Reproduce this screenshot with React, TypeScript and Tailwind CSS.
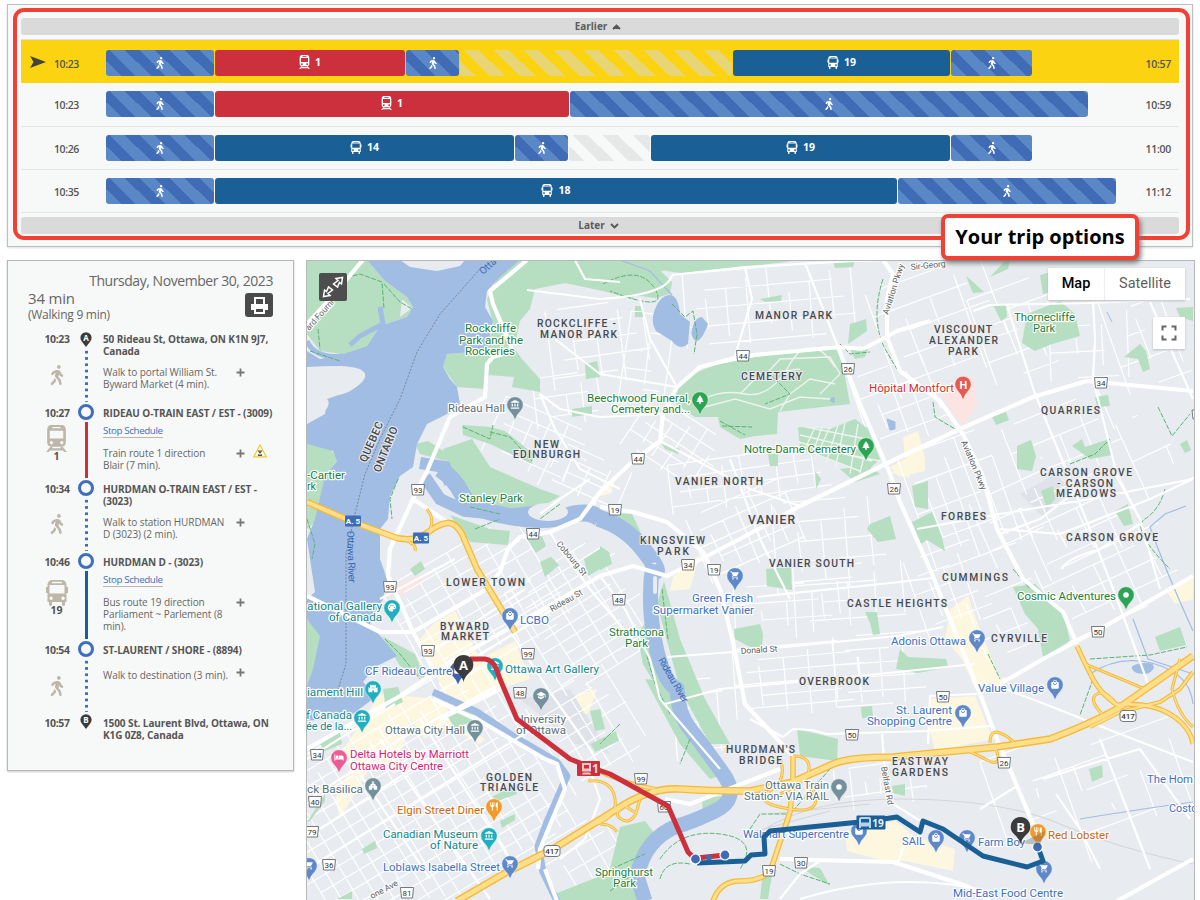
import React from "react";
import {
  MdAccountBalance, MdChurch, MdHotel, MdLocalMall, MdPalette, MdPark, MdRestaurant, MdSchool,
  MdShoppingCart, MdCastle,
} from "react-icons/md";
import { FaWalking } from "react-icons/fa";
import type { IconType } from "react-icons";

/* ---------- small drawings ---------- */

function Walker({ className }: { className: string }) {
  return <FaWalking className={className} />;
}

function TrainIcon({ className }: { className: string }) {
  return (
    <svg viewBox="0 0 20 26" className={className} fill="currentColor">
      <path fillRule="evenodd" d="M4 0h12q3 1 3 5v11q0 5-4 5H5q-4 0-4-5V5q0-4 3-5zM6 2v1.200h8V2zM3.500 5.500v7.500h13V5.500zM5 15.500a1.600 1.600 0 1 0 .1 0zM15 15.500a1.600 1.600 0 1 0 .1 0z" />
      <path d="M4 21h2.500l-1 1.500h9l-1-1.500H16l4 5h-2.500l-1-1.500h-13l-1 1.500H0z" />
    </svg>
  );
}

function BusIcon({ className }: { className: string }) {
  return (
    <svg viewBox="0 0 22 26" className={className} fill="currentColor">
      <path fillRule="evenodd" d="M5 0h12q3 1 3.500 4v3h1.500v6h-1.500v9h-1.500v3q-1.500 2-3 0v-3H6v3q-1.500 2-3 0v-3H1.500v-9H0V7h1.500V4Q2 1 5 0zM6 1.800v1.400h10V1.800zM3.500 5v8.500h15V5zM5 16.500a1.700 1.700 0 1 0 .1 0zM17 16.500a1.700 1.700 0 1 0 .1 0z" />
    </svg>
  );
}

function LetterPin({ letter }: { letter: string }) {
  return (
    <svg viewBox="0 0 12 15" className="h-[15px] w-3">
      <path d="M6 15 1.800 9.500A5.600 5.600 0 1 1 10.200 9.500Z" fill="#3b3b3b" />
      <text x="6" y="8.600" textAnchor="middle" fontSize="8" fontWeight="700" fill="#fff" fontFamily="Open Sans">{letter}</text>
    </svg>
  );
}

/* ---------- trip options ---------- */

type Seg = { kind: "walk" | "train" | "bus" | "wait" | "waitY"; w: string; route?: string };
type Trip = { from: string; to: string; active?: boolean; pad: string; segs: Seg[] };

const trips: Trip[] = [
  {
    from: "10:23", to: "10:57", active: true, pad: "h-[43px] pt-[10px]",
    segs: [
      { kind: "walk", w: "w-[108px]" }, { kind: "train", w: "w-[190px]", route: "1" }, { kind: "walk", w: "w-[53px]" },
      { kind: "waitY", w: "w-[272px]" }, { kind: "bus", w: "w-[217px]", route: "19" }, { kind: "walk", w: "w-[81px]" },
    ],
  },
  {
    from: "10:23", to: "10:59", pad: "h-[44px] border-b pt-[8px]",
    segs: [{ kind: "walk", w: "w-[108px]" }, { kind: "train", w: "w-[354px]", route: "1" }, { kind: "walk", w: "w-[518px]" }],
  },
  {
    from: "10:26", to: "11:00", pad: "h-[43px] border-b pt-[8px]",
    segs: [
      { kind: "walk", w: "w-[108px]" }, { kind: "bus", w: "w-[299px]", route: "14" }, { kind: "walk", w: "w-[53px]" },
      { kind: "wait", w: "w-[81px]" }, { kind: "bus", w: "w-[299px]", route: "19" }, { kind: "walk", w: "w-[81px]" },
    ],
  },
  {
    from: "10:35", to: "11:12", pad: "h-[43px] border-b pt-[8px]",
    segs: [{ kind: "walk", w: "w-[108px]" }, { kind: "bus", w: "w-[682px]", route: "18" }, { kind: "walk", w: "w-[218px]" }],
  },
];

const segStyle = {
  walk: "bg-[#3f6cb5] bg-[linear-gradient(45deg,#5a87c6_25%,transparent_25%,transparent_50%,#5a87c6_50%,#5a87c6_75%,transparent_75%)] bg-[length:30px_30px] bg-[position:0_100%]",
  train: "bg-[#cc303c]",
  bus: "bg-[#1a5f96]",
  wait: "bg-[linear-gradient(45deg,#e6e8e8_25%,transparent_25%,transparent_50%,#e6e8e8_50%,#e6e8e8_75%,transparent_75%)] bg-[length:30px_30px] bg-[position:0_100%]",
  waitY: "bg-[linear-gradient(45deg,#e8d576_25%,transparent_25%,transparent_50%,#e8d576_50%,#e8d576_75%,transparent_75%)] bg-[length:30px_30px] bg-[position:0_100%]",
};

function TripRow({ trip }: { trip: Trip }) {
  return (
    <div className={`flex items-start border-[#e4e6e6] ${trip.active ? "bg-[#fbd310]" : ""} ${trip.pad}`}>
      <div className="flex h-[26px] w-[85px] items-center pl-2 text-[10.5px] font-semibold text-[#555]">
        <svg viewBox="0 0 17 12" className={`mb-[2px] h-3 w-[17px] ${trip.active ? "" : "invisible"}`}>
          <path d="M1 0 17 6 1 12 4.500 6Z" fill="#43433b" />
        </svg>
        <span className="ml-2 mt-[4px] tracking-[-0.4px]">{trip.from}</span>
      </div>
      <div className="flex flex-1 gap-px">
        {trip.segs.map((s, i) => (
          <div key={i} className={`flex h-[26px] items-center justify-center rounded-[3px] text-white ${s.w} ${segStyle[s.kind]}`}>
            {s.kind === "walk" && <Walker className="h-[12px] w-[10px]" />}
            {s.kind === "train" && <TrainIcon className="mb-[2px] h-[14px] w-[11px]" />}
            {s.kind === "bus" && <BusIcon className="mb-[2px] h-[13px] w-[12px]" />}
            {s.route && <span className="mb-[2px] ml-[5px] text-[10.5px] font-bold leading-none">{s.route}</span>}
          </div>
        ))}
      </div>
      <span className="mr-2 mt-[7px] text-[10.5px] font-semibold tracking-[-0.3px] text-[#555]">{trip.to}</span>
    </div>
  );
}

function Chevron({ flip, solid }: { flip?: boolean; solid?: boolean }) {
  return (
    <svg viewBox="0 0 9 6" className={`h-[6px] w-[9px] ${flip ? "rotate-180" : ""}`}>
      <path d="M1 5 4.500 1.500 8 5" fill={solid ? "#555" : "none"} stroke="#555" strokeWidth="1.800" />
    </svg>
  );
}

function TripOptions() {
  return (
    <section className="relative ml-[7px] mt-[4px] h-[243px] w-[1186px] shrink-0 border border-[#bdbfbf] bg-[#f7f9f8] px-[13px] pt-[13px] shadow-[0_1px_2px_#ddd]">
      <div className="flex h-[17px] items-center justify-center gap-[5px] rounded-[3px] bg-[#dadada] pr-[4px] text-[10px] font-bold text-[#5c5c5c]">
        Earlier <Chevron solid />
      </div>
      <div className="mt-1 w-[1158px] border-t border-[#dfe1e6]">
        {trips.map((t, i) => <TripRow key={i} trip={t} />)}
      </div>
      <div className="mt-1 flex h-[17px] items-center justify-center gap-[5px] rounded-[3px] bg-[#dadada] pr-[3px] text-[10px] font-bold text-[#5c5c5c]">
        Later <Chevron flip />
      </div>
      <div className="absolute left-[5px] top-[3px] h-[232px] w-[1177px] rounded-[11px] border-4 border-[#f04134]" />
      <div className="absolute left-[933px] top-[209px] z-10 flex h-[46px] w-[198px] items-center justify-center rounded-[7px] border-4 border-[#f04134] bg-white text-[20px] font-bold text-black shadow-[2px_3px_5px_#777]">
        Your trip options
      </div>
    </section>
  );
}

/* ---------- itinerary ---------- */

type Stop = {
  time: string; h: string; mark: string; title: string; titlePad: string; link?: boolean;
  legPad?: string; leg?: string; plus?: string; alert?: boolean;
  icon?: "walk" | "train" | "bus"; iconPad?: string; route?: string; line?: string;
};

const DOTS = "w-[3px] bg-[radial-gradient(circle,#3f6fbb_1.400px,transparent_1.700px)] bg-[length:3px_6.300px]";

const stops: Stop[] = [
  { time: "10:23", h: "h-[72px]", mark: "A", title: "50 Rideau St, Ottawa, ON K1N 9J7, Canada", titlePad: "pt-[1px]", leg: "Walk to portal William St. Byward Market (4 min).", legPad: "pt-[9px]", plus: "mt-[2px]", icon: "walk", iconPad: "mt-[20px]", line: DOTS },
  { time: "10:27", h: "h-[76px]", mark: "", title: "RIDEAU O-TRAIN EAST / EST - (3009)", titlePad: "pt-[3px]", link: true, leg: "Train route 1 direction\nBlair (7 min).", legPad: "pt-[9px]", plus: "mt-[2px]", alert: true, icon: "train", iconPad: "mt-[6px]", route: "1", line: "w-[3px] bg-[#cc303c]" },
  { time: "10:34", h: "h-[73px]", mark: "", title: "HURDMAN O-TRAIN EAST / EST - (3023)", titlePad: "pt-[3px]", leg: "Walk to station HURDMAN D (3023) (2 min).", legPad: "pt-[9px]", plus: "mt-[2px]", icon: "walk", iconPad: "mt-[19px]", line: DOTS },
  { time: "10:46", h: "h-[88px]", mark: "", title: "HURDMAN D - (3023)", titlePad: "pt-[3px]", link: true, leg: "Bus route 19 direction Parliament ~ Parlement (8 min).", legPad: "pt-[9px]", plus: "mt-[2px]", icon: "bus", iconPad: "mt-[12px]", route: "19", line: "w-[3px] bg-[#1a5f96]" },
  { time: "10:54", h: "h-[73px]", mark: "", title: "ST-LAURENT / SHORE - (8894)", titlePad: "pt-[3px]", leg: "Walk to destination (3 min).", legPad: "pt-[13px]", plus: "-mt-[1px]", icon: "walk", iconPad: "mt-[20px]", line: DOTS },
  { time: "10:57", h: "h-[40px]", mark: "B", title: "1500 St. Laurent Blvd, Ottawa, ON K1G 0Z8, Canada", titlePad: "pt-[3px]" },
];

function StopRow({ s }: { s: Stop }) {
  return (
    <div className={`flex leading-[12px] ${s.h}`}>
      <div className="flex w-[50px] shrink-0 flex-col items-center text-[#555]">
        <span className={`ml-[8px] text-[10.5px] font-bold tracking-[-0.4px] ${s.titlePad}`}>{s.time}</span>
        {s.icon === "walk" && <Walker className={`ml-[7px] h-[20px] w-[16px] text-[#bdb6a9] ${s.iconPad}`} />}
        {s.icon === "train" && <TrainIcon className={`ml-[7px] h-[27px] w-[21px] text-[#bdb6a9] ${s.iconPad}`} />}
        {s.icon === "bus" && <BusIcon className={`ml-[7px] h-[26px] w-[24px] text-[#bdb6a9] ${s.iconPad}`} />}
        {s.route && <span className="-mt-px ml-[7px] text-[10.5px] font-bold leading-[10px]">{s.route}</span>}
      </div>
      <div className="flex w-[16px] shrink-0 flex-col items-center">
        {s.mark ? <LetterPin letter={s.mark} /> : <div className="h-[16px] w-[16px] shrink-0 rounded-full border-[3px] border-[#3f6fbb] bg-[#f7f9f8]" />}
        {s.line && <div className={`my-[2px] flex-1 ${s.line}`} />}
      </div>
      <div className="ml-[9px] w-[172px] shrink-0">
        <div className={`text-[10px] font-bold tracking-[-0.1px] text-[#555] ${s.titlePad}`}>{s.title}</div>
        {s.link && <a className="mt-[6px] block w-fit border-b border-[#bdb6a9] text-[9.8px] tracking-[-0.4px] text-[#3f6fbb]">Stop Schedule</a>}
        {s.leg && (
          <div className={`flex ${s.legPad}`}>
            <p className="w-[128px] shrink-0 whitespace-pre-line text-[10px] tracking-[-0.08px] text-[#666]">{s.leg}</p>
            <svg viewBox="0 0 9 9" className={`ml-[5px] h-[9px] w-[9px] shrink-0 ${s.plus}`}><path d="M4.500 .5v8M.5 4.500h8" stroke="#777" strokeWidth="1.800" /></svg>
            {s.alert && (
              <svg viewBox="0 0 14 14" className="-mt-[3px] ml-[8px] h-[14px] w-[14px] shrink-0">
                <path d="M7 1 13.200 12.800H.8Z" fill="#fffdf0" stroke="#f4c92b" strokeWidth="1.200" />
                <path d="m5 6.500 4 5m0-5-4 5M5 7h4M5 11.500h4" stroke="#555" strokeWidth="1.100" />
              </svg>
            )}
          </div>
        )}
      </div>
    </div>
  );
}

function Itinerary() {
  return (
    <aside className="h-[511px] w-[287px] shrink-0 border border-[#b5b8b7] bg-[#f7f9f8] pl-[20px] pr-[20px] pt-[12px] text-[#666] shadow-[0_1px_2px_#ccc]">
      <p className="text-right text-[14px] leading-[16px] tracking-[-0.44px]">Thursday, November 30, 2023</p>
      <div className="flex justify-between">
        <div>
          <p className="mt-px text-[15px] leading-[17px] tracking-[-0.2px]">34 min</p>
          <p className="text-[12px] leading-[16px] tracking-[-0.25px]">(Walking 9 min)</p>
        </div>
        <div className="mt-[4px] flex h-[24px] w-[28px] items-center justify-center rounded-[3px] bg-[#4a4a4a]">
          <svg viewBox="0 0 17 17" className="h-[17px] w-[17px]" fill="none" stroke="#fff" strokeWidth="2">
            <path d="M4 8V1h9v7" />
            <path d="M1 13V8h15v5" fill="#fff" />
            <path d="M4 11h9v5H4z" fill="#4a4a4a" />
          </svg>
        </div>
      </div>
      <div className="mt-[9px]">{stops.map((s) => <StopRow key={s.time} s={s} />)}</div>
    </aside>
  );
}

/* ---------- map geometry ---------- */

/** Evenly spaced block streets inside a turned rectangle: [cx, cy, w, h, angle, stepX, stepY]. */
const blocks: number[][] = [
  [478, 605, 155, 120, -30, 19, 13], [410, 810, 270, 200, -31, 15, 14], [585, 615, 115, 120, -32, 20, 12],
  [590, 730, 90, 100, -31, 22, 15], [540, 445, 100, 60, 24, 17, 13], [585, 480, 80, 50, 24, 20, 13],
  [600, 345, 100, 80, -8, 24, 17], [570, 400, 70, 50, -8, 16, 20], [770, 305, 170, 75, -5, 21, 18],
  [650, 360, 50, 90, 8, 22, 19], [675, 445, 90, 60, 33, 16, 14], [750, 480, 160, 50, -8, 18, 14],
  [750, 530, 110, 70, -24, 17, 16], [830, 545, 110, 90, -5, 24, 20], [790, 610, 110, 50, -4, 26, 17],
  [850, 600, 110, 70, -4, 27, 18], [800, 680, 130, 70, -5, 25, 12], [880, 670, 90, 70, -4, 23, 14],
  [900, 405, 80, 80, -20, 19, 22], [945, 325, 130, 110, -20, 30, 24], [1020, 330, 80, 90, -20, 28, 22],
  [960, 500, 90, 120, -20, 15, 30], [950, 590, 70, 80, -20, 18, 17], [1020, 520, 80, 70, -25, 22, 26],
  [1090, 520, 120, 80, -25, 26, 24], [1110, 580, 130, 80, -25, 28, 20], [1010, 620, 70, 60, -22, 20, 20],
  [1070, 440, 120, 70, -22, 26, 27], [1150, 330, 80, 110, -20, 30, 27], [1090, 340, 80, 80, -3, 26, 26],
  [1050, 780, 120, 80, -20, 43, 36], [1130, 790, 120, 110, -20, 38, 41], [880, 780, 90, 30, -8, 15, 28],
  [590, 860, 90, 70, -30, 19, 18], [700, 720, 50, 80, -5, 22, 14], [1160, 450, 60, 80, -25, 36, 40],
];

function blockPath([cx, cy, w, h, a, sx, sy]: number[]): string {
  const r = (a * Math.PI) / 180;
  const p = (x: number, y: number) =>
    `${(cx + x * Math.cos(r) - y * Math.sin(r)).toFixed(1)} ${(cy + x * Math.sin(r) + y * Math.cos(r)).toFixed(1)}`;
  let d = "";
  let n = 0;
  for (let x = -w / 2; x <= w / 2; x += sx, n++)
    d += `M${p(x, -h / 2 + ((n * 7) % 4) * sy * 0.5)}L${p(x + ((n * 5) % 3) - 1, h / 2 - ((n * 5) % 3) * sy * 0.5)}`;
  for (let y = -h / 2; y <= h / 2; y += sy, n++)
    d += `M${p(-w / 2 + ((n * 5) % 3) * sx * 0.5, y)}L${p(w / 2 - ((n * 7) % 4) * sx * 0.5, y)}`;
  return d;
}

const greens = [
  "M307 261H367L385 282 407 298 413 308 407 318 380 327 373 338 367 347 343 355 320 352 307 335Z",
  "M520 261H672V271L650 273 632 300 603 292 565 284 535 290 530 310 520 322 515 345 500 350 487 352 493 325 487 300 497 280Z",
  "M447 355 487 352 513 347 522 360 540 380V393L512 388 514 378 489 376 485 390 457 388 443 368Z",
  "M462 426 490 428 505 432 534 455 532 465 490 445 463 436Z", "M307 445 330 450 338 460 325 477 318 520 307 530Z",
  "M307 620 322 637 316 668 307 687Z", "M415 445 428 442 448 455 446 462 420 455Z",
  "M677 385Q700 368 745 358L840 350 850 405 795 411 778 413 777 435 755 437 740 440 720 428 718 418 695 418 673 403Z",
  "M672 261 800 261 745 268 682 274 666 272Z", "M600 261 650 262 672 283 670 295 655 299 625 295 600 283Z", "M850 325 866 320 867 332 848 345Z", "M850 350 868 350 865 358 855 360Z",
  "M833 261 855 261 853 268 835 269Z", "M966 277 972 282 984 293 973 294Z", "M990 278 1005 262 1010 261 1008 270Z",
  "M1027 315 1060 302 1075 315 1080 337 1052 345 1035 352 1022 344Z", "M1040 276 1055 272 1060 290 1043 295Z", "M993 306 1006 305 1007 318 1001 322Z",
  "M1124 358 1140 345 1146 352 1150 370 1143 373 1138 360Z", "M1095 398l13-2 2 11-13 1zM992 418l14-5 3 8-13 5z",
  "M1017 447 1031 441 1036 457 1032 472 1017 470Z", "M1041 492 1053 487 1055 500 1047 510Z", "M1115 512 1128 505 1133 525 1124 527Z", "M1072 447 1082 440 1085 448 1100 443 1110 440 1112 456 1090 460Z",
  "M1180 445l7-4 4 10-6 3z", "M1176 309 1193 308V322L1180 318Z", "M912 523 932 513 942 538 945 552 927 541 921 545Z", "M912 487 928 482 928 510 915 508Z",
  "M1013 588 1035 585 1063 613 1070 642 1043 658 1038 630 1025 615Z", "M1155 638 1180 628 1186 646 1160 652Z",
  "M443 450 472 440 490 468 540 490 560 497 530 515 490 510 462 500 452 480Z", "M450 516 490 530 510 532 508 546 470 543Z",
  "M527 540l15-3 4 10-10 7zM540 563l11-5 8 8-14 12zM584 560l16-10v20l-12 7zM410 570l11-8 4 8-10 7z", "M613 514 632 515 646 545 640 545 618 525Z",
  "M600 547l9 6 3 12-12 6z", "M637 635 648 620 650 650 665 682 655 685 643 665Z", "M664 582 680 640 705 700 730 745 710 745 680 690 657 605Z",
  "M766 570 791 568 792 591 767 587Z", "M734 630 760 625 763 635 762 648 750 648 735 640Z", "M865 613 877 613 880 635 873 636 870 624Z", "M870 525 890 517 896 540 878 543 867 530Z",
  "M798 428 830 430 855 420 868 430 880 460 864 475 840 465 800 450Z", "M840 470l28-3 12 8-25 8z", "M900 650l8 8 38 2 2 8-30 6-22-4z",
  "M797 730 838 740 837 762 800 757Z", "M861 708l11-1 1 11-11 1z", "M892 787l13-2v12l-12-3z", "M1089 770l13-4 1 12-11 5z", "M795 867 820 869 830 887 803 870Z", "M762 880 772 876 768 900H760Z",
  "M382 637 415 655 425 680 400 667Z", "M448 718 465 708 477 720 455 730Z", "M383 690l15-2 5 15-17 8z", "M320 745 340 733 342 745 325 752Z",
  "M645 680 665 682 695 740 725 775 710 780 680 745Z", "M591 745l25-13 3 10-24 11z", "M590 712 600 710 605 730 595 732Z", "M702 798 735 797 720 812 703 816Z",
  "M620 828 645 822 655 835 640 850 630 878 610 870Z", "M555 895 605 875 635 880 640 902 555 902Z", "M493 797 515 787 517 795 495 803Z", "M500 822l15-7v6l-13 8z", "M362 850l13-8 2 7-13 6z",
  "M307 823 325 795 325 802 310 822Z", "M337 900l15-8v8z", "M585 365 597 362 600 378 586 380Z", "M572 410l20-3v8l-20 3z", "M635 307h8v5h-8zM635 313h8v5h-8z", "M760 300 782 296 781 302 765 303Z",
  "M662 445 680 450 678 455 665 450Z", "M768 455h10v12h-8z", "M815 472l6 8-5 10z",
];

const yellows = [
  "M433 625 455 612 480 660 515 642 530 680 500 690 465 705 445 695 420 640Z", "M380 695 440 700 455 720 485 740 480 745 445 725 425 740 410 720 395 775 375 760 340 820 335 800 355 760 340 755Z",
  "M673 578 700 555 690 590 670 592Z", "M600 490 615 482 610 495 600 497Z", "M950 610 968 597 976 620 1000 680 975 690 962 660 945 640Z",
  "M930 700 975 697 993 740 935 752 927 720Z", "M845 832 895 822 915 838 955 850 953 872 905 862 885 862 847 852Z", "M1165 590 1193 577V600L1175 605Z",
  "M903 438 918 432 925 460 925 472 900 478 890 468 905 460Z", "M890 473l20-3v9z", "M597 690l-20 5-10 20 10 8 12-10z", "M985 680 1010 678 1000 687Z",
];

const river =
  "M367 261H400L410 268 437 272 460 267 465 261H520L500 278 487 292 485 308 493 322 490 335 487 352 447 355 443 368 450 380 457 388 460 405 447 415 427 425 417 445 413 468 400 477 390 497 388 520 380 530V560L387 580 383 600 370 625 383 640 397 657 375 668 363 683 377 697 350 717 307 722V687L313 670 320 637 307 620V600L315 593 307 540 315 520 325 477 337 462 333 452 307 445V425L325 415 327 400 350 392 363 375 340 367 307 368V352L320 360 343 355 367 347 373 338 380 327 407 318 413 308 407 298 385 282Z";

const mediumRoads = [
  "M757 598 900 583 932 579", "M667 658 733 653 897 637 943 628", "M750 720 783 738 793 730 812 731 827 735 927 732 990 727", "M977 695 930 697 928 745",
  "M882 733 884 763 890 803 917 820 943 830", "M997 687 1050 707 1120 735 1193 763", "M973 312 990 306 1090 304 1190 300", "M1007 306 1034 392 1078 500 1117 600 1150 690",
  "M1093 302 1095 340 1093 380 1118 480 1140 520 1160 590", "M1150 303 1193 400", "M917 530 1000 515 1090 500 1193 480", "M1193 480 1150 500 1060 535 1000 530",
  "M1062 570Q1065 560 1100 550L1140 525", "M1000 535 1040 520 1092 480", "M487 590 455 610 413 633", "M455 560 380 600", "M525 590 435 650", "M553 610 465 665",
  "M512 635 548 690 590 750 600 768", "M590 480 560 500 540 515", "M550 533 560 550 590 590 640 650", "M600 577 625 610 650 660 660 700 720 770",
  "M310 800 400 740 500 685", "M320 830 435 755", "M307 870 420 800 540 725", "M380 740 440 830 490 900", "M420 720 510 860", "M350 760 430 880", "M307 760 395 705",
  "M665 705 720 690 830 680 975 665", "M1017 787 980 810", "M1043 780 1100 762 1140 750", "M1056 795 1080 830 1100 870", "M1140 750 1190 820", "M1100 740 1150 870",
  "M898 863 905 845 912 842", "M780 900 800 875 820 862", "M800 900Q900 870 990 893", "M575 261 585 280 620 283", "M672 276 745 268 855 262 890 261",
  "M672 276Q668 296 600 300L527 291", "M745 268 752 300 735 357", "M805 264 838 348", "M677 388 600 375 555 340", "M663 415 600 418 560 410 540 395", "M540 395 555 430 580 470 620 490",
  "M640 300 650 340 677 388", "M700 368 760 356", "M587 763 600 800 585 840 560 860", "M660 442 750 490 800 507", "M730 460 760 540 790 600",
];

const majorRoads = [
  "M900 372 940 402 963 435 982 475 997 530 1023 580 1063 613 1077 645", "M883 261 893 275 887 300 887 338 900 372", "M1193 392 1087 382 1033 398 960 430 900 458 800 507 740 540 707 557 667 577 633 567 600 577 540 612 455 660 400 697 307 750",
  "M863 350 840 348 743 357 700 368 677 388 663 415 660 442 633 462 600 493 580 520 550 533 520 538 508 550 500 573 487 590", "M838 348 860 405 890 475 900 503 930 570 950 620 977 687 997 740 1017 787 1040 842",
  "M863 350 897 332 930 322", "M600 508 633 513 667 523 703 553 720 590 733 643 745 705 793 757", "M1193 577 1100 630 1043 660 1000 685", "M527 261 490 292 493 305 513 352 493 358 487 365 485 398 450 418 427 472 413 500 390 550 388 577 400 603 413 633 433 670",
  "M307 597 360 623 380 633 413 633 487 590", "M413 500 447 523", "M363 261 330 300 307 325", "M780 860 893 863 967 887 990 902", "M1193 860 1117 902", "M433 700 480 722 545 760 557 765 565 790 540 850 538 870",
  "M440 720 480 700 500 690", "M557 902 545 870", "M665 800 690 805 780 770",
];

const highways: [string, number][] = [
  ["M457 902 507 873 553 850 617 810Q650 788 680 790T750 792L793 783 833 765Q850 758 893 758L997 748 1050 740Q1090 725 1117 710L1160 680 1193 657", 6],
  ["M307 503 353 523 397 539Q415 543 427 534T447 524 462 535L477 570 515 633", 5],
  ["M590 768Q625 785 655 790", 3], ["M793 757V785L790 813 770 873Q760 882 740 882T713 902", 4],
  ["M1077 647Q1085 665 1093 680T1117 706Q1150 703 1170 715T1193 745", 3.5], ["M1193 673 1180 690 1160 703 1120 713 1090 728", 2.5],
  ["M1102 715Q1088 700 1097 695T1117 706", 1.5], ["M793 757Q810 757 809 770T780 795", 1.5], ["M780 760Q788 780 770 792T790 810 810 785", 1.5], ["M588 782Q612 780 615 800T590 827", 1.5],
  ["M640 800 636 814Q630 826 621 820T625 807L636 814", 1.5], ["M600 825Q612 825 617 833", 1.5], ["M965 750 985 760Q1000 768 998 757T987 748", 1.5], ["M990 744Q990 730 1000 734T1015 745", 1.5],
  ["M1180 660 1172 690Q1178 715 1193 728", 1.5], ["M427 510Q435 520 430 530T410 545", 1.5], ["M405 541Q417 545 415 552", 1.5], ["M1085 665 1145 690", 1.5],
];

const trails = [
  "M340 280 360 275 382 283 384 310", "M384 285 400 303 412 310", "M310 352 340 362", "M318 330 320 350", "M463 428 490 440 493 426", "M490 433 510 438 532 462", "M603 285Q640 265 655 290T610 292",
  "M672 305 685 318 693 312 697 335 694 355", "M770 375 790 395 765 405", "M722 427 752 428M720 422 745 436", "M475 530 500 520", "M385 640 400 655 420 680", "M398 480 390 500 392 520",
  "M645 650 655 685 670 715M662 590 668 640", "M1165 490Q1160 510 1145 520T1170 570", "M1090 660 1150 656 1187 648", "M600 875 645 855M610 892 640 870", "M660 860Q680 830 720 835T740 870", "M660 880Q665 860 690 865",
  "M750 830 760 815 790 815 830 770", "M840 345 850 355 870 353", "M883 280Q870 320 885 350L897 370", "M933 403 935 418 955 430", "M1158 408 1172 437 1190 415", "M1070 465 1095 455 1110 440",
  "M780 865 800 875 830 885", "M988 655 1000 680", "M307 520 315 545 312 560", "M1013 570 1030 590", "M1093 680 1080 716", "M620 725 600 745", "M690 740 680 765", "M470 508 500 515", "M560 505 540 520",
];

type Lab = [string, number, number, number, number?];
/* text, left, baseline, width, size */
const areas: Lab[] = [
  ["ROCKCLIFFE -", 537, 328, 79], ["MANOR PARK", 540, 339, 77], ["MANOR PARK", 755, 320, 77], ["VISCOUNT", 934, 334, 58], ["ALEXANDER", 929, 345, 69], ["PARK", 948, 356, 30],
  ["CEMETERY", 741, 381, 61], ["QUARRIES", 1041, 415, 59], ["NEW", 534, 449, 25], ["EDINBURGH", 513, 459, 67], ["VANIER NORTH", 675, 486, 88], ["CARSON GROVE", 1040, 477, 92],
  ["- CARSON", 1057, 488, 56], ["MEADOWS", 1056, 498, 60], ["FORBES", 941, 521, 45], ["VANIER", 748, 525, 47, 12], ["KINGSVIEW", 640, 545, 65], ["PARK", 657, 556, 32], ["VANIER SOUTH", 769, 568, 85],
  ["CARSON GROVE", 1066, 542, 92], ["CUMMINGS", 942, 582, 66], ["LOWER TOWN", 446, 587, 79], ["CASTLE HEIGHTS", 847, 608, 100], ["BYWARD", 440, 631, 49], ["MARKET", 441, 641, 48],
  ["CYRVILLE", 991, 643, 56], ["OVERBROOK", 799, 686, 70], ["HURDMAN'S", 726, 754, 69], ["BRIDGE", 739, 765, 43], ["GOLDEN", 486, 782, 46], ["TRIANGLE", 480, 792, 58], ["EASTWAY", 892, 766, 56], ["GARDENS", 892, 777, 56],
];
const G = "#188038", B = "#3d6fc4", T = "#12868f", S = "#557180", O = "#c9670e", R = "#d93025", P = "#d81b73";
const places: [string, ...Lab][] = [
  [G, "Rockcliffe", 465, 333, 51], [G, "Park and the", 459, 345, 64], [G, "Rockeries", 465, 356, 50], [G, "Thornecliffe", 1014, 322, 61], [G, "Park", 1033, 333, 22],
  [G, "Beechwood Funeral,", 587, 403, 103], [G, "Cemetery and...", 611, 414, 79], [G, "Notre-Dame Cemetery", 744, 454, 112], [G, "Stanley Park", 459, 503, 64], [G, "Strathcona", 609, 637, 55], [G, "Park", 625, 648, 23],
  [G, "Cosmic Adventures", 1017, 601, 99], [G, "-Cartier", 307, 480, 38], [G, "rk", 307, 491, 9], [G, "Springhurst", 595, 877, 58], [G, "Park", 613, 888, 23],
  [R, "Hôpital Montfort", 869, 393, 85], [S, "Rideau Hall", 448, 413, 57], [B, "Green Fresh", 692, 603, 61], [B, "Supermarket Vanier", 653, 615, 101], [B, "LCBO", 520, 625, 29], [B, "Adonis Ottawa", 891, 646, 75],
  [B, "Value Village", 978, 693, 66], [B, "St. Laurent", 896, 715, 56], [B, "Shopping Centre", 867, 726, 85], [B, "CF Rideau Centre", 365, 676, 87], [T, "Ottawa Art Gallery", 505, 674, 94],
  [T, "ational Gallery", 307, 611, 75], [T, "of Canada", 329, 622, 53], [T, "iament Hill", 307, 697, 56], [T, "f Canada", 306, 720, 46], [T, "ée de la...", 306, 731, 46], [S, "Ottawa City Hall", 385, 735, 80],
  [S, "University", 516, 724, 50], [S, "of Ottawa", 516, 735, 50], [P, "Delta Hotels by Marriott", 350, 759, 119], [P, "Ottawa City Centre", 350, 771, 93], [S, "ck Basilica", 307, 794, 56], [O, "Elgin Street Diner", 397, 815, 87],
  [T, "Canadian Museum", 383, 839, 95], [T, "of Nature", 430, 850, 48], [B, "Loblaws Isabella Street", 383, 872, 117], [S, "Ottawa Train", 765, 790, 64], [S, "Station- VIA RAIL", 744, 801, 85],
  [B, "Walmart Supercentre", 743, 839, 106], [B, "SAIL", 902, 846, 23], [B, "Farm Boy", 978, 847, 47], [O, "Red Lobster", 1048, 840, 61], [B, "Mid-East Food Centre", 953, 898, 110], [B, "The Hom", 1147, 784, 46], [B, "Costc", 1169, 813, 28],
];

const pins: [number, number, string, IconType | null][] = [
  [515, 406, "#74909c", MdAccountBalance], [700, 401, "#2da455", MdPark], [866, 447, "#2da455", MdPark], [735, 577, "#5f88c8", MdShoppingCart], [510, 617, "#5f88c8", MdLocalMall],
  [1126, 596, "#2da455", null], [977, 639, "#5f88c8", MdShoppingCart], [1055, 686, "#5f88c8", MdLocalMall], [963, 714, "#5f88c8", MdLocalMall], [495, 667, "#1fafbe", MdAccountBalance],
  [392, 609, "#1fafbe", MdPalette], [373, 690, "#1fafbe", MdCastle], [362, 719, "#1fafbe", MdAccountBalance], [475, 729, "#74909c", MdAccountBalance], [541, 697, "#74909c", MdSchool],
  [339, 759, "#ea5c92", MdHotel], [373, 787, "#74909c", MdChurch], [494, 808, "#f29a27", MdRestaurant], [489, 837, "#1fafbe", MdAccountBalance], [510, 865, "#5f88c8", MdShoppingCart], [309, 867, "#5f88c8", MdShoppingCart],
  [839, 788, "#74909c", null], [859, 832, "#5f88c8", MdLocalMall], [936, 839, "#5f88c8", MdLocalMall], [967, 839, "#5f88c8", MdShoppingCart], [1044, 870, "#5f88c8", MdShoppingCart], [1038, 833, "#f29a27", MdRestaurant], [458, 671, "#3d63b0", MdLocalMall],
];

const shields: [number, number, string][] = [
  [743, 357, "44"], [848, 370, "26"], [638, 460, "44"], [1101, 384, "34"], [418, 491, "93"], [533, 535, "44"], [390, 588, "93"], [428, 652, "93"], [528, 655, "99"], [615, 511, "19"],
  [688, 566, "34"], [714, 571, "19"], [619, 601, "48"], [894, 490, "26"], [1098, 633, "50"], [943, 698, "50"], [852, 736, "50"], [1004, 764, "26"], [520, 694, "48"], [317, 756, "34"], [315, 803, "40"],
  [312, 833, "79"], [329, 866, "36"], [407, 894, "81"], [641, 780, "99"], [664, 808, "60"], [769, 872, "19"], [801, 864, "30"],
];

const streetNames: [string, number, number, number][] = [
  ["Cobourg St", 556, 545, 50], ["Rideau St", 552, 613, -30], ["Donald St", 741, 655, -4], ["Aviation Pkwy", 888, 316, -72], ["Aviation Pkwy", 961, 443, 67], ["Belfast Rd", 881, 768, 80], ["Sir-Georg", 911, 271, -6],
  ["one Ave", 372, 900, -28], ["ard Fourni", 309, 332, -48],
];

const ROUTE_RED = "M470 660 485 660Q492 661 496 669L500 680 517 720 570 760 590 768 610 775 668 807 688 853 694 859";
const ROUTE_BLUE = "M697 864 745 862 751 856 765 855 764 838 770 832 870 822 897 818 903 822 920 833 923 822 943 830 983 857 1027 868 1043 862 1038 848";

function CityMap() {
  return (
    <svg viewBox="307 262 887 640" className="block h-[640px] w-[887px]" fontFamily="Roboto, sans-serif" fill="none">
      <rect x="307" y="261" width="887" height="642" fill="#e8ebef" />
      {yellows.map((d) => <path key={d} d={d} fill="#fef7e0" />)}
      <path d="M940 395 973 378 977 405 963 428Z M395 587 423 575 424 583 397 599Z" fill="#fce4e3" />
      <path d="M1020 495 1055 475 1070 490 1043 518Z M520 700 570 690 610 755 575 745Z" fill="#dfe2e8" />
      <path d={blocks.map(blockPath).join("")} stroke="#fff" strokeWidth="1.200" />
      {greens.map((d) => <path key={d} d={d} fill="#b6dec1" />)}
      <path d={river} fill="#a2bde4" />
      <path d="M307 368 340 367Q363 368 365 375T350 392Q335 400 325 392 312 382 318 395 335 400 325 412L307 425Z" fill="#e8ebef" />
      <path d="M380 308 383 325 360 337 350 346M307 342Q315 360 343 357" stroke="#a2bde4" strokeWidth="5" />
      <path d="M402 300 412 309 400 318Z" fill="#e8ebef" />
      <path d="M420 464 445 468 450 485M425 478 440 500 465 512 507 516 540 512" stroke="#a2bde4" strokeWidth="12" />
      <path d="M440 470Q455 480 462 495T507 517 567 517 600 520" stroke="#a2bde4" strokeWidth="17" />
      <path d="M598 519Q625 527 643 550T655 572" stroke="#a2bde4" strokeWidth="17" />
      <path d="M653 565Q647 603 655 643T677 690Q678 715 690 730T724 776Q740 800 715 812T677 827Q645 840 637 877L645 902" stroke="#a2bde4" strokeWidth="15" strokeLinejoin="round" />
      <ellipse cx="548" cy="513" rx="20" ry="9" fill="#e8ebef" />
      <rect x="653" y="577" width="4" height="18" rx="2" fill="#e8ebef" />
      <path d="M433 693 477 713 513 737 557 763 567 777 547 823 538 847 543 873 557 902" stroke="#a2bde4" strokeWidth="7" strokeLinejoin="round" />
      <path d="M655 310Q660 297 669 296T680 315L690 323 688 345Q680 352 672 342L656 332Q650 322 655 310ZM692 330Q695 318 702 318L708 325Q702 342 696 342 690 338 692 330Z" fill="#a2bde4" />
      <path d="M1132 668q6-5 20-3 4 5-4 9-15 2-16-6zM887 420l8 3 0 7-5 1zM830 401l4-3v6zM1107 313l5 10" fill="#a2bde4" stroke="#a2bde4" />
      <path d="M620 261 650 272 672 296M1186 507 1165 515 1150 528Q1165 570 1193 632M1133 620 1148 660 1193 675M1090 675Q1120 655 1155 665T1193 705M1080 820Q1110 815 1130 812T1193 803" stroke="#a2bde4" strokeWidth="1.200" />
      <path d="M750 840Q800 800 900 800T1060 825 1193 865M770 815 870 805M745 835 830 812" stroke="#d3d6da" strokeWidth="1.200" />
      <path d="M700 402Q720 390 745 395T790 365 835 368M705 408 735 400 770 410 800 398 830 400M760 382 780 360 830 358 840 375 820 395M740 395 760 375 800 370M780 412 790 395 810 380 835 385" stroke="#eef3ef" strokeWidth="1.400" />
      <path d="M800 436 868 452M798 443 872 462M802 450 860 472M806 428 866 440M830 428 815 460M845 424 835 470M858 425 850 475M815 428 805 450M822 428 812 456M838 426 826 464M868 440 860 474M820 450 880 462" stroke="#eef3ef" strokeWidth="1.400" />
      <path d={trails.join("")} stroke="#58b571" strokeWidth="1" strokeDasharray="5 1.500" />
      <path d={mediumRoads.join("")} stroke="#fff" strokeWidth="2.200" strokeLinejoin="round" />
      <path d={majorRoads.join("")} stroke="#fff" strokeWidth="4.200" strokeLinejoin="round" />
      {highways.map(([d, w]) => <path key={d} d={d} stroke="#f6b93a" strokeWidth={w + 1.6} strokeLinejoin="round" />)}
      {highways.map(([d, w]) => <path key={d} d={d} stroke="#fddf8b" strokeWidth={w * 0.8} strokeLinejoin="round" />)}
      <path d="M480 270 440 315 417 353 400 400 380 440 365 475 355 515 346 555 346 665 335 700" stroke="#7a8494" strokeWidth="1" strokeDasharray="2 1.500" />

      <g stroke="#fff" strokeWidth="2.200" paintOrder="stroke" strokeLinejoin="round">
        {streetNames.map(([t, x, y, a]) => (
          <text key={t + y} transform={`translate(${x} ${y}) rotate(${a})`} fontSize="8.500" fill="#5a5d60">{t}</text>
        ))}
        <g stroke="#e8ebef" fill="#474a4d" fontWeight="500">
          {areas.map(([t, x, y, w, size]) => (
            <text key={`${t}-${x}`} x={x} y={y} textLength={w} fontSize={size ?? 10.3}>{t}</text>
          ))}
          <text transform="translate(366 464) rotate(-66)" textLength="43" fontSize="11">QUEBEC</text>
          <text transform="translate(380 474) rotate(-68)" textLength="48" fontSize="11">ONTARIO</text>
        </g>
      </g>
      <g fill="#3b6ab5" fontSize="10">
        <text transform="translate(483 276) rotate(-42)">Otta</text>
        <text transform="translate(347 532) rotate(88)" textLength="52">Ottawa River</text>
        <text transform="translate(658 661) rotate(60)" textLength="50">Rideau River</text>
      </g>

      {shields.map(([x, y, t]) => (
        <g key={`${x}-${y}`}>
          <path d={`M${x - 6.5} ${y - 5.5}h13l-1 10.500h-11z`} fill="#fff" stroke="#75797d" strokeWidth="1" />
          <text x={x} y={y + 3} textAnchor="middle" fontSize="8" fill="#333">{t}</text>
        </g>
      ))}
      <path d="M1194 411h-2l1 9h1" stroke="#75797d" fill="#fff" />
      {[[552, 852], [1128, 717]].map(([x, y]) => (
        <g key={x}>
          <rect x={x - 8} y={y - 5.5} width="16" height="11" rx="3" fill="#fff" stroke="#75797d" />
          <text x={x} y={y + 3} textAnchor="middle" fontSize="8" fontWeight="500" fill="#333">417</text>
        </g>
      ))}
      {[[353, 522], [421, 539]].map(([x, y]) => (
        <g key={x}>
          <rect x={x - 8} y={y - 5.5} width="16" height="11" rx="1" fill="#3b6db8" />
          <text x={x} y={y + 3} textAnchor="middle" fontSize="8" fontWeight="700" fill="#fff">A. 5</text>
        </g>
      ))}

      {pins.map(([x, y, c, Icon]) => (
        <g key={`${x}-${y}`}>
          <path d={`M${x} ${y + 15}Q${x - 1.5} ${y + 10} ${x - 6} ${y + 5.5}A8.200 8.200 0 1 1 ${x + 6} ${y + 5.5}Q${x + 1.5} ${y + 10} ${x} ${y + 15}Z`} fill={c} stroke="#fff" strokeWidth="0.500" />
          {Icon ? <Icon x={x - 5} y={y - 5.5} size={10} color="#fff" /> : <circle cx={x} cy={y} r="2.800" fill="#fff" />}
        </g>
      ))}
      <g>
        <path d="M963 401Q961 395 957 391A8.200 8.200 0 1 1 969 391Q965 395 963 401Z" fill="#e8594f" stroke="#fff" strokeWidth="0.500" />
        <text x="963.500" y="389.500" textAnchor="middle" fontSize="11" fontWeight="700" fill="#fff">H</text>
      </g>
      <g stroke="#fff" strokeWidth="2.400" paintOrder="stroke" strokeLinejoin="round" fontWeight="400">
        {places.map(([c, t, x, y, w]) => (
          <text key={`${t}-${x}-${y}`} x={x} y={y} textLength={w} lengthAdjust="spacingAndGlyphs" fontSize="11.300" fill={c}>{t}</text>
        ))}
      </g>

      <path d={ROUTE_BLUE} stroke="#1a5f96" strokeWidth="5" strokeLinejoin="round" />
      <path d={ROUTE_RED} stroke="#cc303c" strokeWidth="5" strokeLinejoin="round" />
      <path d="M697 859 725 856" stroke="#cc303c" strokeWidth="5" />
      {[[695.5, 860, 5], [709, 858.5, 3], [725, 856, 5], [1037.5, 848, 5]].map(([x, y, r]) => (
        <circle key={x} cx={x} cy={y} r={r} fill="#3f6cb5" stroke={r > 3 ? "#fff" : "none"} strokeWidth="1.200" />
      ))}
      <rect x="577" y="762" width="23" height="15" rx="1" fill="#cc303c" />
      <path fillRule="evenodd" d="M582 764h9v8.500h-9zM584 766v3.500h5V766zM581.500 775.500 583.500 773.500H589.500L591.500 775.500Z" fill="#f2c5c8" />
      <text x="595.500" y="774" textAnchor="middle" fontSize="12" fontWeight="700" fill="#f6dcde" fontFamily="Open Sans">1</text>
      <rect x="856.500" y="816.500" width="29" height="14" rx="1" fill="#1a5f96" />
      <path fillRule="evenodd" d="M861 818h8q2 0 2 2v9h-2v-1.500h-8v1.500h-2v-9q0-2 2-2zM861 820v3.500h8V820z" fill="#b9d3e6" />
      <text x="878" y="827.500" textAnchor="middle" fontSize="10" fontWeight="700" fill="#e6f0f7" fontFamily="Open Sans">19</text>
      <path d="M1021 844 1045 832 1040 846Z" fill="#555" opacity=".3" />
      {([[463.5, 666, "A"], [1020.5, 828, "B"]] as [number, number, string][]).map(([x, y, t]) => (
        <g key={t} transform={`translate(${x} ${y})`}>
          <path d="M0 17Q-1 12-6 7.500A9.800 9.800 0 1 1 6 7.500Q1 12 0 17Z" fill="#3b3b3b" />
          <text y="4.500" textAnchor="middle" fontSize="13" fontWeight="700" fill="#fff" fontFamily="Open Sans">{t}</text>
        </g>
      ))}
    </svg>
  );
}

function MapPanel() {
  return (
    <main className="relative h-[642px] w-[889px] shrink-0 overflow-hidden border border-[#b5b8b7]">
      <CityMap />
      <button className="absolute left-[12px] top-[12px] flex h-[28px] w-[28px] items-center justify-center rounded-[2px] bg-[#4d4d4d]">
        <svg viewBox="0 0 24 24" className="h-6 w-6" fill="none" stroke="#fff" strokeWidth="1.500">
          <path d="M15 3.500 21.500 2.500 20.500 9 18.500 7.500 16.500 12 12.500 9 17 5.500ZM9 20.500 2.500 21.500 3.500 15 5.500 16.500 7.500 12 11.500 15 7 18.500Z" />
        </svg>
      </button>
      <div className="absolute right-[9px] top-[7px] flex h-[32px] items-center bg-white font-[Roboto] text-[14.5px] shadow-[0_1px_2px_#bbb]">
        <span className="flex h-full w-[57px] items-center justify-center border-r border-[#eee] font-medium text-black">Map</span>
        <span className="flex w-[80px] justify-center text-[#5f5f5f]">Satellite</span>
      </div>
      <div className="absolute right-[9px] top-[56px] flex h-[32px] w-[32px] items-center justify-center bg-white shadow-[0_1px_2px_#bbb]">
        <svg viewBox="0 0 16 16" className="h-4 w-4" fill="none" stroke="#666" strokeWidth="2">
          <path d="M1.500 5.500v-4h4M10.500 1.500h4v4M14.500 10.500v4h-4M5.500 14.500h-4v-4" />
        </svg>
      </div>
    </main>
  );
}

export default function App() {
  return (
    <div className="flex h-[900px] w-[1200px] flex-col overflow-hidden bg-white font-['Open_Sans',sans-serif]">
      <TripOptions />
      <div className="ml-[7px] mt-[13px] flex items-start gap-[12px]">
        <Itinerary />
        <MapPanel />
      </div>
    </div>
  );
}
